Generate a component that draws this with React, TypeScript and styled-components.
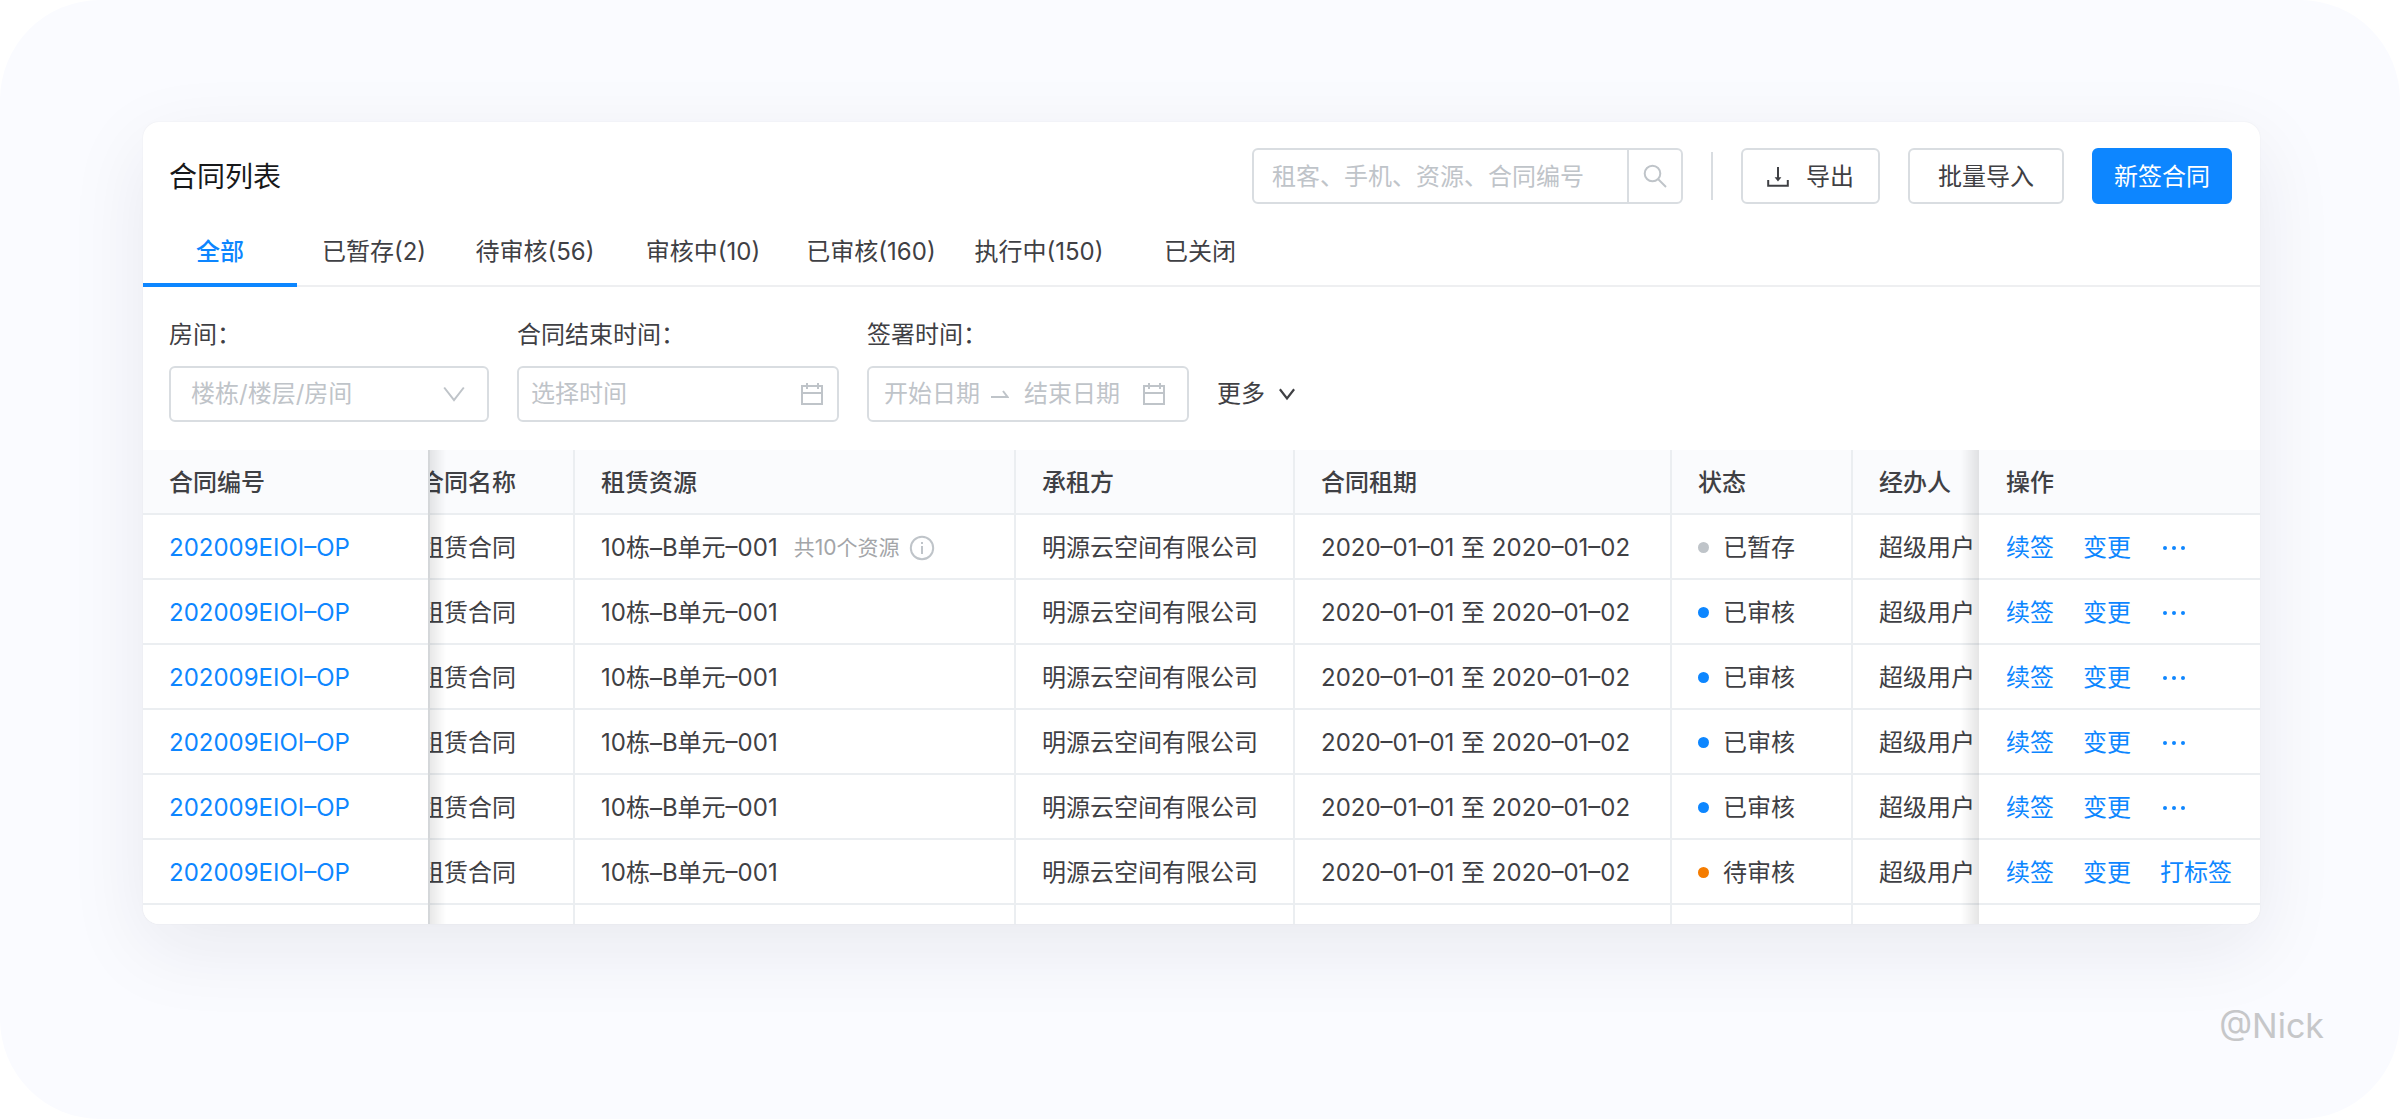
import React, { useLayoutEffect, useRef } from 'react';
import styled, { createGlobalStyle } from 'styled-components';

const color = {
  text: '#3f4044',
  title: '#17181a',
  muted: '#a3a5a8',
  hint: '#bfc4c9',
  line: '#d9dde1',
  grid: '#ebeef1',
  primary: '#0d86ff',
};

const GlobalStyle = createGlobalStyle`
  *, *::before, *::after { box-sizing: border-box; }
  body {
    margin: 0;
    background: #fff;
    color: ${color.text};
    font-family: Inter, "Noto Sans CJK SC", sans-serif;
    font-size: 24px;
    line-height: 36px;
  }
  button, input, select { font: inherit; color: inherit; }
`;

const Frame = styled.div`
  min-height: 100vh;
  padding-top: 122px;
  border-radius: 100px;
  background: #fafbff;
`;

const Card = styled.main`
  margin: 0 140px 0 143px;
  border-radius: 16px;
  background: #fff;
  overflow: hidden;
  box-shadow: 0 0 2px rgba(0, 0, 0, 0.06), 0 24px 80px rgba(24, 24, 56, 0.08);
`;

const Header = styled.header`
  display: flex;
  align-items: center;
  padding: 26px 28px 26px 26px;
`;

const Title = styled.h1`
  flex: 1;
  margin: 0;
  padding-top: 2px;
  font-size: 28px;
  font-weight: 400;
  line-height: 40px;
  color: ${color.title};
`;

const Box = styled.div<{ $width: number }>`
  display: flex;
  align-items: center;
  width: ${(p) => p.$width}px;
  height: 56px;
  border: 2px solid ${color.line};
  border-radius: 6px;
  background: #fff;
  color: ${color.hint};
`;

const TextInput = styled.input`
  flex: 1;
  min-width: 0;
  padding: 0;
  border: 0;
  outline: 0;
  background: transparent;
  &::placeholder { color: ${color.hint}; opacity: 1; }
`;

const SearchInput = styled(TextInput)`
  padding: 2px 0 0 18px;
`;

const SearchButton = styled.button`
  display: grid;
  place-items: center;
  width: 54px;
  height: 100%;
  padding: 0;
  border: 0;
  border-left: 2px solid ${color.line};
  background: transparent;
  color: ${color.hint};
`;

const Divider = styled.span`
  width: 2px;
  height: 48px;
  margin: 0 28px;
  background: ${color.line};
`;

const Button = styled.button<{ $primary?: boolean; $pad: number }>`
  display: flex;
  align-items: center;
  gap: 17px;
  height: 56px;
  padding: 2px ${(p) => p.$pad}px 0;
  border: 2px solid ${(p) => (p.$primary ? color.primary : color.line)};
  border-radius: 6px;
  background: ${(p) => (p.$primary ? color.primary : '#fff')};
  color: ${(p) => (p.$primary ? '#fff' : color.text)};
`;

const Actions = styled.div`
  display: flex;
  gap: 28px;
`;

const Tabs = styled.div`
  display: flex;
  height: 57px;
  border-bottom: 2px solid #eeeff1;
`;

const Tab = styled.button<{ $active?: boolean; $wide?: boolean }>`
  width: ${(p) => (p.$wide ? 168 : 154)}px;
  height: 57px;
  padding: 0 0 9px;
  border: 0;
  border-bottom: 4px solid ${(p) => (p.$active ? color.primary : 'transparent')};
  background: transparent;
  color: ${(p) => (p.$active ? color.primary : color.text)};
  font-weight: ${(p) => (p.$active ? 500 : 400)};
  white-space: nowrap;
`;

const Filters = styled.form`
  display: flex;
  align-items: flex-end;
  gap: 28px;
  padding: 30px 26px 28px;
`;

const Field = styled.div`
  display: flex;
  flex-direction: column;
  gap: 13px;
`;

const Label = styled.label``;

const SelectBox = styled(Box)`
  position: relative;
  svg {
    position: absolute;
    right: 22px;
    pointer-events: none;
  }
`;

const Select = styled.select`
  width: 100%;
  height: 100%;
  padding: 0 60px 0 20px;
  border: 0;
  outline: 0;
  appearance: none;
  background: transparent;
  color: ${color.hint};
`;

const DateBox = styled(Box)`
  padding: 0 13px 0 12px;
`;

const RangeBox = styled(Box)`
  padding: 0 21px 0 15px;
  gap: 9px;
`;

const RangeInput = styled(TextInput)`
  flex: 0 0 98px;
`;

const EndInput = styled(RangeInput)`
  flex: 1;
  margin-left: 6px;
`;

const More = styled.button`
  display: flex;
  align-items: center;
  gap: 14px;
  height: 56px;
  padding: 0;
  border: 0;
  background: transparent;
`;

const Scroller = styled.div`
  overflow-x: auto;
  scrollbar-width: none;
`;

const Table = styled.table`
  width: 100%;
  min-width: 2227px;
  table-layout: fixed;
  border-collapse: separate;
  border-spacing: 0;
`;

const Cell = styled.td<{ $fixed?: 'left' | 'right' }>`
  height: 65px;
  padding: 2px 0 0 ${(p) => (p.$fixed === 'right' ? 27 : 26)}px;
  border-bottom: 2px solid ${color.grid};
  border-right: ${(p) => (p.$fixed === 'right' ? 0 : 2)}px solid ${color.grid};
  background: #fff;
  text-align: left;
  font-weight: 400;
  white-space: nowrap;

  ${(p) =>
    p.$fixed &&
    `
    position: sticky;
    ${p.$fixed}: 0;
    z-index: 1;
    &::after {
      content: '';
      position: absolute;
      top: 0;
      bottom: -2px;
      width: 18px;
      ${p.$fixed === 'left' ? 'left' : 'right'}: 100%;
      background: linear-gradient(to ${p.$fixed === 'left' ? 'right' : 'left'}, rgba(0, 0, 0, 0.1), transparent);
      pointer-events: none;
    }
  `}
`;

const HeadCell = styled(Cell)`
  background: #fafbfd;
  font-weight: 500;
`;

const TailCell = styled(Cell)`
  height: 19px;
  border-bottom: 0;
`;

const Link = styled.a`
  color: ${color.primary};
  text-decoration: none;
`;

const Inline = styled.div<{ $gap: number }>`
  display: flex;
  align-items: center;
  gap: ${(p) => p.$gap}px;
`;

const Extra = styled.span`
  display: flex;
  align-items: center;
  gap: 10px;
  font-size: 21px;
  color: ${color.muted};
`;

const Dot = styled.i<{ $color: string }>`
  width: 11px;
  height: 11px;
  border-radius: 50%;
  background: ${(p) => p.$color};
`;

const MoreLink = styled.button`
  display: flex;
  padding: 0 2px;
  border: 0;
  background: transparent;
  color: ${color.primary};
`;

const Signature = styled.footer`
  padding: 76px 76px 0 0;
  text-align: right;
  font-size: 34px;
  line-height: 52px;
  color: #c6c7c9;
`;

const SearchIcon = () => (
  <svg width="24" height="24" viewBox="0 0 24 24" fill="none" stroke="currentColor" strokeWidth="2" aria-hidden="true">
    <circle cx="9.5" cy="9.5" r="7.8" />
    <path d="M15 15l8 8" />
  </svg>
);

const DownloadIcon = () => (
  <svg width="22" height="22" viewBox="0 0 22 22" fill="none" stroke="currentColor" strokeWidth="2" aria-hidden="true">
    <path d="M11 1v12M1.2 14v5.8h19.6V14" />
    <path d="M7.6 11.2h6.8L11 15.6z" fill="currentColor" stroke="none" />
  </svg>
);

const ChevronIcon = ({ size, stroke }: { size: number; stroke: number }) => (
  <svg width={size} height={size} viewBox="0 0 22 22" fill="none" stroke="currentColor" strokeWidth={stroke} aria-hidden="true">
    <path d="M1.2 4.5L11 17.2l9.8-12.7" />
  </svg>
);

const CalendarIcon = () => (
  <svg width="24" height="24" viewBox="0 0 24 24" fill="none" stroke="currentColor" strokeWidth="2" aria-hidden="true">
    <path d="M2 4h20v18H2zM2 11h20M7 1v6M18 1v6" />
  </svg>
);

const ArrowIcon = () => (
  <svg width="18" height="12" viewBox="0 0 18 12" fill="none" stroke="currentColor" strokeWidth="2" aria-hidden="true">
    <path d="M0 9h16.5L12 3" />
  </svg>
);

const InfoIcon = () => (
  <svg width="26" height="26" viewBox="0 0 26 26" fill="none" stroke={color.hint} strokeWidth="2" aria-hidden="true">
    <circle cx="13" cy="13" r="11.2" />
    <path d="M13 11v8M13 7v2" />
  </svg>
);

const EllipsisIcon = () => (
  <svg width="24" height="6" viewBox="0 0 24 6" fill="currentColor" aria-hidden="true">
    <circle cx="3" cy="3" r="2" />
    <circle cx="12" cy="3" r="2" />
    <circle cx="21" cy="3" r="2" />
  </svg>
);

const tabs = ['全部', '已暂存(2)', '待审核(56)', '审核中(10)', '已审核(160)', '执行中(150)', '已关闭'];
const columns = ['合同编号', '合同名称', '租赁资源', '承租方', '合同租期', '状态', '经办人', '操作'];
const widths = [287, 181, 441, 279, 377, 181, 200, 281];

const dotColor: Record<string, string> = {
  已暂存: '#bfc4c9',
  已审核: color.primary,
  待审核: '#f57c00',
};

const rows = ['已暂存', '已审核', '已审核', '已审核', '已审核', '待审核'].map((status, i) => ({
  id: i,
  code: '202009EIOI–OP',
  name: '租赁合同',
  resource: '10栋–B单元–001',
  extra: i === 0 ? '共10个资源' : '',
  tenant: '明源云空间有限公司',
  period: '2020–01–01 至 2020–01–02',
  status,
  owner: '超级用户',
}));

const fixedSide = (i: number) => (i === 0 ? 'left' : i === columns.length - 1 ? 'right' : undefined);

export default function App() {
  const scroller = useRef<HTMLDivElement>(null);

  useLayoutEffect(() => {
    if (scroller.current) scroller.current.scrollLeft = 36;
  }, []);

  return (
    <>
      <GlobalStyle />
      <Frame>
        <Card>
          <Header>
            <Title>合同列表</Title>
            <Box $width={431} role="search">
              <SearchInput aria-label="搜索合同" placeholder="租客、手机、资源、合同编号" />
              <SearchButton type="button" aria-label="搜索">
                <SearchIcon />
              </SearchButton>
            </Box>
            <Divider />
            <Actions>
              <Button type="button" $pad={24}>
                <DownloadIcon />
                导出
              </Button>
              <Button type="button" $pad={28}>批量导入</Button>
              <Button type="button" $pad={20} $primary>新签合同</Button>
            </Actions>
          </Header>

          <Tabs role="tablist">
            {tabs.map((name, i) => (
              <Tab key={name} type="button" role="tab" aria-selected={i === 0} $active={i === 0} $wide={i > 1 && i < 6}>
                {name}
              </Tab>
            ))}
          </Tabs>

          <Filters>
            <Field>
              <Label htmlFor="room">房间：</Label>
              <SelectBox $width={320}>
                <Select id="room" defaultValue="">
                  <option value="">楼栋/楼层/房间</option>
                </Select>
                <ChevronIcon size={22} stroke={2} />
              </SelectBox>
            </Field>
            <Field>
              <Label htmlFor="end">合同结束时间：</Label>
              <DateBox $width={322}>
                <TextInput id="end" placeholder="选择时间" />
                <CalendarIcon />
              </DateBox>
            </Field>
            <Field>
              <Label htmlFor="sign">签署时间：</Label>
              <RangeBox $width={322}>
                <RangeInput id="sign" placeholder="开始日期" />
                <ArrowIcon />
                <EndInput aria-label="结束日期" placeholder="结束日期" />
                <CalendarIcon />
              </RangeBox>
            </Field>
            <More type="button">
              更多
              <ChevronIcon size={16} stroke={3} />
            </More>
          </Filters>

          <Scroller ref={scroller}>
            <Table>
              <colgroup>
                {widths.map((w, i) => (
                  <col key={i} style={{ width: w }} />
                ))}
              </colgroup>
              <thead>
                <tr>
                  {columns.map((name, i) => (
                    <HeadCell as="th" scope="col" key={name} $fixed={fixedSide(i)}>
                      {name}
                    </HeadCell>
                  ))}
                </tr>
              </thead>
              <tbody>
                {rows.map((row) => (
                  <tr key={row.id}>
                    <Cell $fixed="left">
                      <Link href="#">{row.code}</Link>
                    </Cell>
                    <Cell>{row.name}</Cell>
                    <Cell>
                      <Inline $gap={16}>
                        {row.resource}
                        {row.extra && (
                          <Extra>
                            {row.extra}
                            <InfoIcon />
                          </Extra>
                        )}
                      </Inline>
                    </Cell>
                    <Cell>{row.tenant}</Cell>
                    <Cell>{row.period}</Cell>
                    <Cell>
                      <Inline $gap={14}>
                        <Dot $color={dotColor[row.status]} />
                        {row.status}
                      </Inline>
                    </Cell>
                    <Cell>{row.owner}</Cell>
                    <Cell $fixed="right">
                      <Inline $gap={29}>
                        <Link href="#">续签</Link>
                        <Link href="#">变更</Link>
                        {row.status === '待审核' ? (
                          <Link href="#">打标签</Link>
                        ) : (
                          <MoreLink type="button" aria-label="更多操作">
                            <EllipsisIcon />
                          </MoreLink>
                        )}
                      </Inline>
                    </Cell>
                  </tr>
                ))}
                <tr>
                  {columns.map((name, i) => (
                    <TailCell key={name} $fixed={fixedSide(i)} />
                  ))}
                </tr>
              </tbody>
            </Table>
          </Scroller>
        </Card>
        <Signature>@Nick</Signature>
      </Frame>
    </>
  );
}
